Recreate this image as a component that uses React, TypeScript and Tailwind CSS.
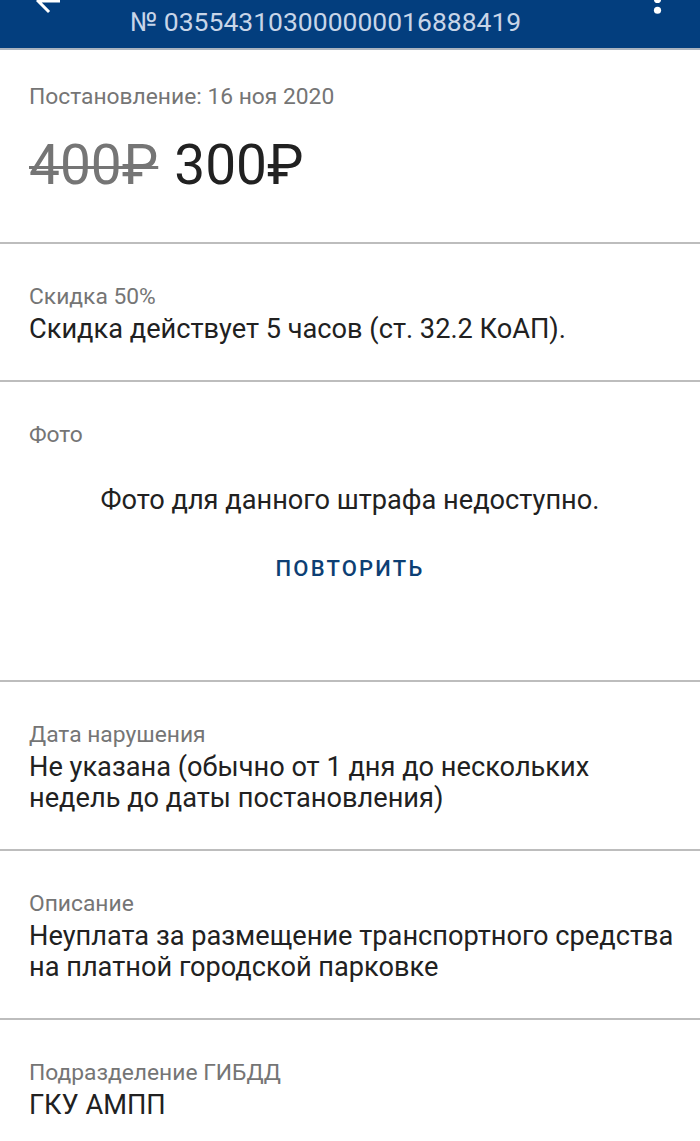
import React from "react";

const font = { fontFamily: "Roboto, 'Noto Sans', sans-serif" };

function Section({ label, children }: { label: string; children: React.ReactNode }) {
  return (
    <div className="border-b-2 border-[#bdbdbd] pl-[29px] pr-[16px] pt-[41px] pb-[35px]">
      <div className="text-[22.8px] leading-[24px] text-[#757575]">{label}</div>
      <div className="mt-[5px] whitespace-nowrap text-[27.2px] leading-[31px] text-[#212121]">{children}</div>
    </div>
  );
}

export default function App() {
  return (
    <div className="min-h-screen bg-white overflow-hidden" style={font}>
      {/* Toolbar (scrolled up, only its bottom part is visible) */}
      <div className="h-[48px] bg-[#033e7e] flex items-start overflow-hidden">
        <svg
          viewBox="0 0 24 24"
          className="w-[36px] h-[36px] ml-[30px] -mt-[17px] shrink-0"
          fill="#ffffff"
        >
          <path d="M20 11H7.83l5.59-5.59L12 4l-8 8 8 8 1.41-1.41L7.83 13H20v-2z" />
        </svg>
        <div className="ml-[64px] mt-[7px] text-[26.5px] leading-[30px] text-[#c8d5e8] whitespace-nowrap">
          № 035543103000000016888419
        </div>
        <svg
          viewBox="0 0 24 24"
          className="w-[43px] h-[43px] ml-auto mr-[21px] -mt-[22px] shrink-0"
          fill="#ffffff"
        >
          <circle cx="12" cy="6" r="2" />
          <circle cx="12" cy="12" r="2" />
          <circle cx="12" cy="18" r="2" />
        </svg>
      </div>
      <div className="h-[2px] bg-[#aab3bf]" />

      {/* Постановление */}
      <div className="border-b-2 border-[#bdbdbd] px-[29px] pt-[35px] pb-[45px]">
        <div className="text-[22.8px] leading-[24px] text-[#757575]">Постановление: 16 ноя 2020</div>
        <div className="mt-[24px] flex gap-[16px] text-[55px] leading-[64px]">
          <span className="text-[#757575] line-through decoration-[3px]">400₽</span>
          <span className="text-[#212121]">300₽</span>
        </div>
      </div>

      <Section label="Скидка 50%">Скидка действует 5 часов (ст. 32.2 КоАП).</Section>

      {/* Фото */}
      <div className="border-b-2 border-[#bdbdbd] px-[29px] pt-[41px] pb-[99px]">
        <div className="text-[22.8px] leading-[24px] text-[#757575]">Фото</div>
        <div className="mt-[38px] text-center text-[27.2px] leading-[31px] text-[#212121]">
          Фото для данного штрафа недоступно.
        </div>
        <div className="mt-[41px] flex justify-center">
          <button className="text-[22px] leading-[24px] font-medium tracking-[2.2px] text-[#0d3f74]">
            ПОВТОРИТЬ
          </button>
        </div>
      </div>

      <Section label="Дата нарушения">
        Не указана (обычно от 1 дня до нескольких
        <br />
        недель до даты постановления)
      </Section>

      <Section label="Описание">
        Неуплата за размещение транспортного средства
        <br />
        на платной городской парковке
      </Section>

      <div className="pl-[29px] pr-[16px] pt-[41px] pb-[35px]">
        <div className="text-[22.8px] leading-[24px] text-[#757575]">Подразделение ГИБДД</div>
        <div className="mt-[5px] text-[27.2px] leading-[31px] text-[#212121]">ГКУ АМПП</div>
      </div>
    </div>
  );
}
